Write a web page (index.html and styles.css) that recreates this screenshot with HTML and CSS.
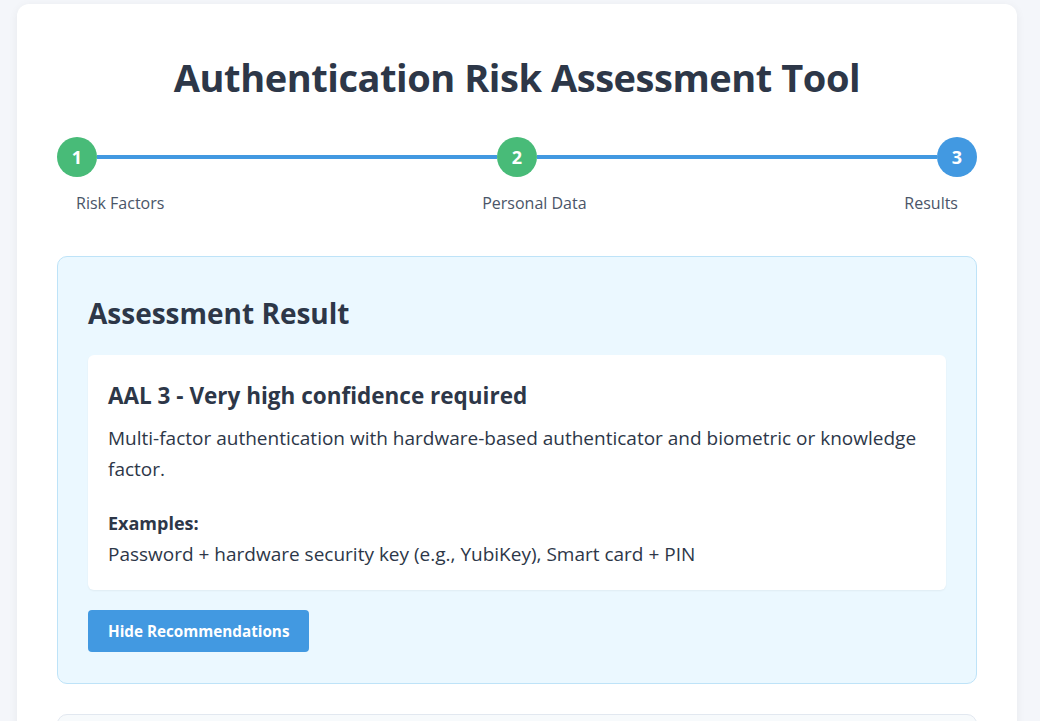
FILE: index.html
```html
<!DOCTYPE html>
<html lang="en">
<head>
<meta charset="utf-8">
<title>Authentication Risk Assessment Tool</title>
<link rel="stylesheet" href="styles.css">
</head>
<body>
<div class="container">
  <h1 class="title">Authentication Risk Assessment Tool</h1>
  <div class="stepper">
    <div class="track">
      <div class="step done">1</div>
      <div class="line"></div>
      <div class="step done">2</div>
      <div class="line"></div>
      <div class="step active">3</div>
    </div>
    <div class="labels">
      <span>Risk Factors</span>
      <span>Personal Data</span>
      <span>Results</span>
    </div>
  </div>
  <section class="result">
    <h2 class="result-title">Assessment Result</h2>
    <div class="card">
      <h3 class="card-title">AAL 3 - Very high confidence required</h3>
      <p class="card-desc">Multi-factor authentication with hardware-based authenticator and biometric or knowledge factor.</p>
      <p class="ex-label">Examples:</p>
      <p class="ex-text">Password + hardware security key (e.g., YubiKey), Smart card + PIN</p>
    </div>
    <button class="btn">Hide Recommendations</button>
  </section>
  <section class="next"></section>
</div>
</body>
</html>
```
FILE: styles.css
```css
* { box-sizing: border-box; }
html, body { margin: 0; }
body {
  background: #f4f6fa;
  font-family: "Open Sans", "Noto Sans", sans-serif;
  color: #2d3748;
  padding: 4px 23px 0 17px;
  height: 721px;
  overflow: hidden;
}
.container {
  width: 1000px;
  background: #fff;
  border-radius: 12px;
  box-shadow: 0 2px 10px rgba(0,0,0,0.06);
  padding: 40px 40px 0;
  height: 760px;
}
.title {
  margin: 10px 0 37px;
  text-align: center;
  font-size: 38px;
  font-weight: 700;
  letter-spacing: -0.45px;
  line-height: 46px;
  color: #2d3748;
}
.track {
  display: flex;
  align-items: center;
}
.step {
  width: 40px;
  height: 40px;
  border-radius: 50%;
  color: #fff;
  font-weight: 700;
  font-size: 18px;
  display: flex;
  align-items: center;
  justify-content: center;
  flex: none;
}
.step.done { background: #48bb78; }
.step.active { background: #4299e1; }
.line {
  flex: 1;
  height: 4px;
  background: #4299e1;
}
.labels {
  display: flex;
  justify-content: space-between;
  padding: 0 19px;
  margin-top: 18px;
  font-size: 16px;
  color: #4a5568;
  line-height: 1;
}
.result {
  margin-top: 45px;
  background: #ebf8ff;
  border: 1px solid #bee3f8;
  border-radius: 10px;
  padding: 30px 30px 31px;
}
.result-title {
  margin: 10px 0 24px;
  font-size: 28px;
  font-weight: 700;
  line-height: 1.2;
}
.card {
  background: #fff;
  border-radius: 6px;
  padding: 20px 20px 20px;
  box-shadow: 0 1px 2px rgba(0,0,0,0.05);
}
.card-title {
  margin: 6px 0 13px;
  font-size: 22.5px;
  font-weight: 700;
  line-height: 29px;
}
.card-desc {
  margin: 0 0 23px;
  font-size: 19px;
  line-height: 31px;
}
.ex-label {
  margin: 0;
  font-size: 18px;
  font-weight: 700;
  line-height: 31px;
}
.ex-text {
  margin: 0;
  font-size: 19px;
  line-height: 31px;
}
.btn {
  margin-top: 20px;
  background: #4299e1;
  color: #fff;
  border: none;
  border-radius: 4px;
  height: 42px;
  padding: 0 20px;
  font-family: inherit;
  font-size: 15.25px;
  font-weight: 700;
}
.next {
  margin-top: 30px;
  height: 60px;
  background: #f7fafc;
  border: 1px solid #e2e8f0;
  border-radius: 10px;
}
```
